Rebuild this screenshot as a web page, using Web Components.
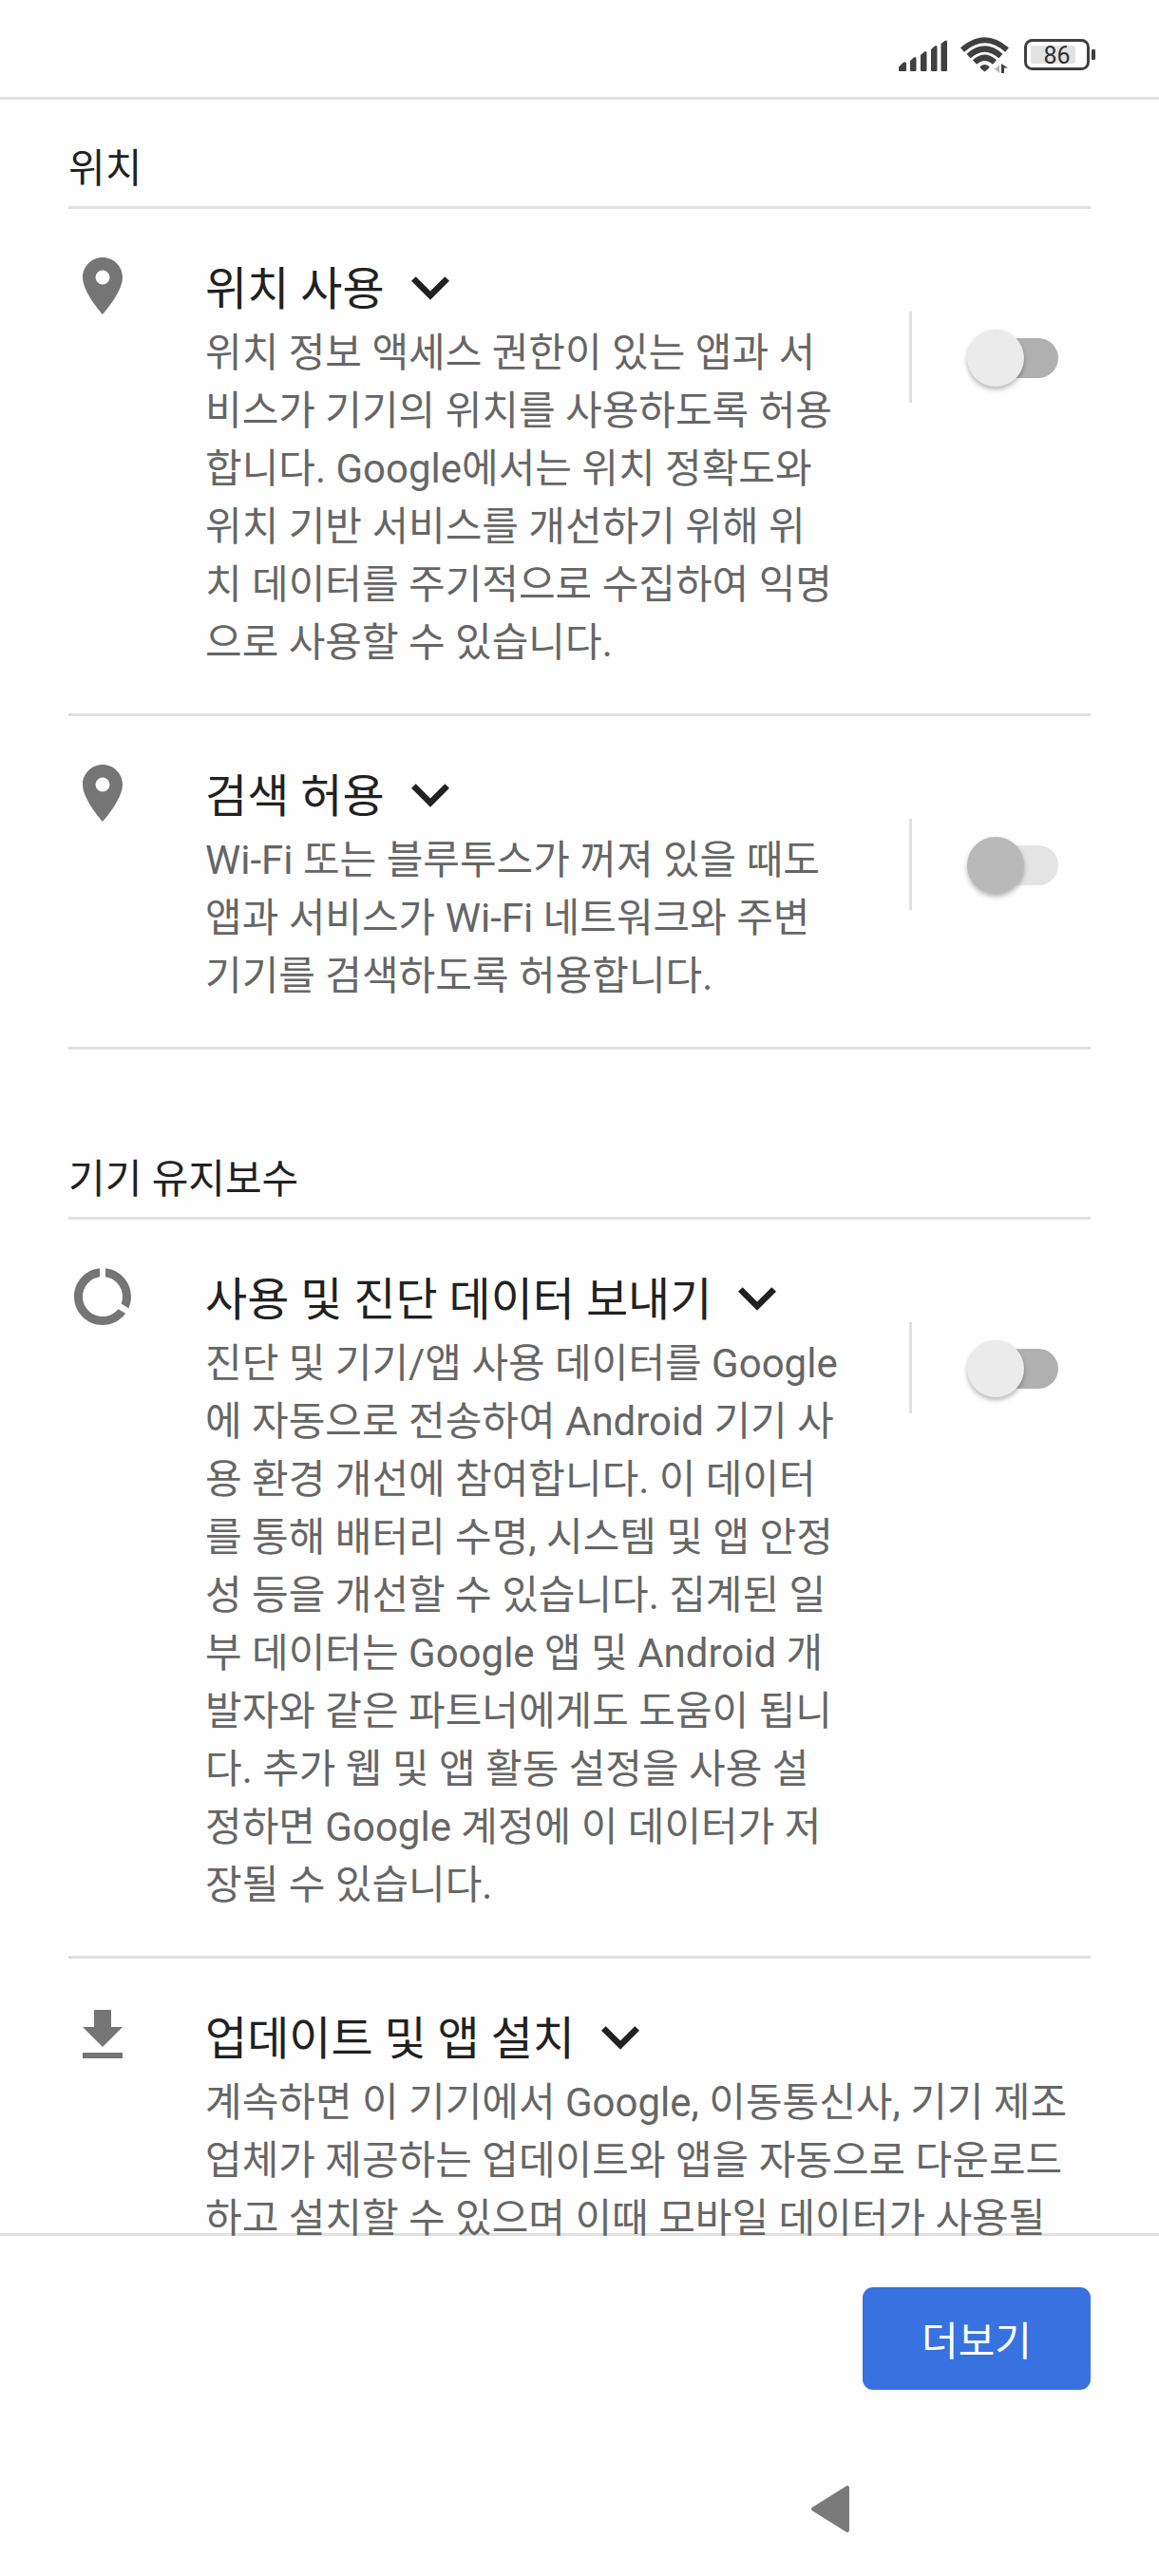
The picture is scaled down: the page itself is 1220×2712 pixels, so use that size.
<!DOCTYPE html>
<html lang="ko">
<head>
<meta charset="utf-8">
<meta name="viewport" content="width=device-width, initial-scale=1">
<title>Google 서비스</title>
<style>
  :root {
    --ink: #212121;
    --muted: #666666;
    --icon: #757575;
    --line: #e0e0e0;
    --accent: #3872e0;
    --gutter: 72px;
  }
  body {
    margin: 0;
    background: #fefefe;
    color: var(--ink);
    font-family: Roboto, "Noto Sans CJK KR", sans-serif;
    font-size: 42px;
    line-height: 61px;
  }
</style>
</head>
<body>
<setup-page>
  <status-bar slot="status"></status-bar>
  <setting-section heading="위치">
    <setting-item icon="place" heading="위치 사용" control="off">위치 정보 액세스 권한이 있는 앱과 서비스가 기기의 위치를 사용하도록 허용합니다. Google에서는 위치 정확도와 위치 기반 서비스를 개선하기 위해 위치 데이터를 주기적으로 수집하여 익명으로 사용할 수 있습니다.</setting-item>
    <setting-item icon="place" heading="검색 허용" control="disabled">Wi-Fi 또는 블루투스가 꺼져 있을 때도 앱과 서비스가 Wi-Fi 네트워크와 주변 기기를 검색하도록 허용합니다.</setting-item>
  </setting-section>
  <setting-section heading="기기 유지보수">
    <setting-item icon="usage" heading="사용 및 진단 데이터 보내기" control="off">진단 및 기기/앱 사용 데이터를 Google에 자동으로 전송하여 Android 기기 사용 환경 개선에 참여합니다. 이 데이터를 통해 배터리 수명, 시스템 및 앱 안정성 등을 개선할 수 있습니다. 집계된 일부 데이터는 Google 앱 및 Android 개발자와 같은 파트너에게도 도움이 됩니다. 추가 웹 및 앱 활동 설정을 사용 설정하면 Google 계정에 이 데이터가 저장될 수 있습니다.</setting-item>
    <setting-item icon="download" heading="업데이트 및 앱 설치">계속하면 이 기기에서 Google, 이동통신사, 기기 제조업체가 제공하는 업데이트와 앱을 자동으로 다운로드하고 설치할 수 있으며 이때 모바일 데이터가 사용될</setting-item>
  </setting-section>
  <action-bar slot="footer">더보기</action-bar>
  <nav-bar slot="footer"></nav-bar>
</setup-page>

<script>
  const define = (name, html, setup) => {
    const template = document.createElement('template');
    template.innerHTML = html;
    customElements.define(name, class extends HTMLElement {
      constructor() {
        super();
        this.attachShadow({ mode: 'open' }).append(template.content.cloneNode(true));
      }
      connectedCallback() {
        if (setup) setup(this, this.shadowRoot);
      }
    });
  };

  define('setup-page', `
    <style>
      :host { display: flex; flex-direction: column; height: 100vh; }
      /* the inset rule sits beneath scrolled text */
      main { flex: 1; min-height: 0; overflow: hidden; padding: 0 var(--gutter); box-shadow: inset 0 -3px var(--line); }
    </style>
    <slot name="status"></slot>
    <main><slot></slot></main>
    <slot name="footer"></slot>`);

  define('status-bar', `
    <style>
      :host { display: flex; flex: none; justify-content: flex-end; align-items: center; height: 102px; padding-right: 66px; border-bottom: 3px solid var(--line); }
      svg { display: block; width: 210px; height: 40px; margin-top: 16px; fill: #404040; }
      text { font: 25px Roboto, sans-serif; fill: #303030; }
      .wave { fill: none; stroke: #404040; stroke-width: 6; }
    </style>
    <svg viewBox="0 0 210 40" role="img" aria-label="신호, Wi-Fi, 배터리 86%">
      <path d="M2 35V31.500L6 27.500Q10 25 10 28V35Q10 36 9 36H3Q2 36 2 35Z"/>
      <path d="M14 35V25L18 21.500Q20.500 20 20.500 23V35Q20.500 36 19.500 36H15Q14 36 14 35Z"/>
      <path d="M25 35V19L29 15.500Q31.500 14 31.500 17V35Q31.500 36 30.500 36H26Q25 36 25 35Z"/>
      <path d="M36 35V13L40 9.500Q42.500 8 42.500 11V35Q42.500 36 41.500 36H37Q36 36 36 35Z"/>
      <path d="M46.500 35V7L50.500 4Q53 2.500 53 5V35Q53 36 52 36H47.500Q46.500 36 46.500 35Z"/>
      <path class="wave" d="M69 13.500Q92.500 -7 116 13.500"/>
      <path class="wave" d="M75.500 20Q92.500 5 109.500 20"/>
      <path class="wave" d="M82 26.500Q92.500 17 103 26.500"/>
      <path d="M87.500 31Q92.500 27 97.500 31Q97.500 33 92.500 36.500Q87.500 33 87.500 31Z"/>
      <path d="M108 29V38L102 32.500H105Z" fill="#b5b5b5"/>
      <path d="M110 38V28L117 32.500H113V38Z"/>
      <rect x="135.500" y="3.500" width="66" height="30" rx="7" fill="none" stroke="#404040" stroke-width="3"/>
      <rect x="141" y="9" width="47" height="19" rx="3" fill="#e3e3e3"/>
      <rect x="205" y="13" width="4" height="11" rx="1"/>
      <text x="168.500" y="28" text-anchor="middle">86</text>
    </svg>`);

  define('setting-section', `
    <style>
      :host { display: block; }
      :host(:not(:first-of-type)) { padding-top: 64px; }
      h2 { margin: 0; padding: 42px 0 9px; border-bottom: 3px solid var(--line); font: inherit; }
    </style>
    <section><h2></h2><slot></slot></section>`,
    (host, root) => { root.querySelector('h2').textContent = host.getAttribute('heading'); });

  define('setting-switch', `
    <style>
      :host { display: flex; align-items: center; box-sizing: border-box; width: 191px; height: 96px; padding: 2px 0 0 58px; border-left: 3px solid var(--line); }
      input { --track: #b0b0b0; --thumb: #ebebeb; appearance: none; display: flex; align-items: center; flex: none; margin: 0; width: 96px; height: 60px; }
      input::before { content: ""; flex: none; width: 60px; height: 60px; border-radius: 50%; background: var(--thumb); box-shadow: 0 3px 5px rgba(0,0,0,.28); z-index: 1; }
      input::after { content: ""; flex: none; width: 84px; height: 42px; margin-left: -48px; border-radius: 21px; background: var(--track); }
      input:disabled { --track: #e4e4e4; --thumb: #b9b9b9; }
    </style>
    <input type="checkbox" role="switch">`,
    (host, root) => {
      const input = root.querySelector('input');
      input.disabled = host.hasAttribute('disabled');
      input.setAttribute('aria-label', host.getAttribute('label'));
    });

  const icons = {
    place: 'M12 2C8.130 2 5 5.130 5 9c0 5.250 7 13 7 13s7-7.750 7-13c0-3.870-3.130-7-7-7zm0 9.500a2.500 2.500 0 0 1 0-5 2.500 2.500 0 0 1 0 5z',
    usage: 'M13 2.050v3.030c3.390.49 6 3.390 6 6.920 0 .9-.18 1.750-.48 2.540l2.600 1.530c.56-1.240.88-2.620.88-4.070 0-5.180-3.950-9.450-9-9.950zM12 19c-3.870 0-7-3.130-7-7 0-3.530 2.610-6.430 6-6.920V2.050c-5.060.5-9 4.760-9 9.950 0 5.520 4.470 10 9.990 10 3.310 0 6.240-1.610 8.060-4.090l-2.600-1.530C16.170 17.980 14.210 19 12 19z',
    download: 'M19 9h-4V3H9v6H5l7 7 7-7zM5 18v2h14v-2H5z'
  };

  define('setting-item', `
    <style>
      :host { display: flex; align-items: flex-start; gap: 72px; padding: 45px 0 44px; border-bottom: 3px solid var(--line); }
      .icon { flex: none; width: 72px; height: 72px; fill: var(--icon); }
      .body { flex: 1; min-width: 0; }
      h3 { margin: 0; font: inherit; }
      button { display: flex; align-items: center; gap: 28px; margin: 0; padding: 0; border: 0; background: none; color: inherit; font: inherit; font-size: 48px; line-height: 72px; text-align: left; }
      span { padding-top: 4px; }
      .chevron { flex: none; width: 40px; height: 25px; fill: var(--ink); }
      p { margin: 0; color: var(--muted); }
      setting-switch { flex: none; margin-top: 63px; }
    </style>
    <svg class="icon" viewBox="0 0 24 24" aria-hidden="true"><path/></svg>
    <div class="body">
      <h3><button type="button" aria-expanded="false"><span></span><svg class="chevron" viewBox="6 8.590 12 7.410" aria-hidden="true"><path d="M16.590 8.590L12 13.170 7.410 8.590 6 10l6 6 6-6z"/></svg></button></h3>
      <p><slot></slot></p>
    </div>`,
    (host, root) => {
      root.querySelector('.icon path').setAttribute('d', icons[host.getAttribute('icon')]);
      root.querySelector('span').textContent = host.getAttribute('heading');
      const control = host.getAttribute('control');
      if (control) {
        const toggle = document.createElement('setting-switch');
        toggle.setAttribute('label', host.getAttribute('heading'));
        if (control === 'disabled') toggle.setAttribute('disabled', '');
        root.append(toggle);
      }
    });

  define('action-bar', `
    <style>
      :host { display: flex; flex: none; justify-content: flex-end; padding: 54px var(--gutter); }
      button { min-width: 240px; height: 108px; padding: 6px 60px 0; border: 0; border-radius: 11px; background: var(--accent); color: #fff; font: inherit; }
    </style>
    <button type="button"><slot></slot></button>`);

  define('nav-bar', `
    <style>
      :host { display: flex; flex: none; justify-content: flex-end; align-items: center; height: 142px; padding-right: 306px; }
      button { display: grid; place-items: center; width: 80px; height: 80px; padding: 0; border: 0; background: none; }
      svg { width: 40px; height: 49px; fill: #7a7a7a; stroke: #7a7a7a; stroke-width: 4; stroke-linejoin: round; }
    </style>
    <button type="button" aria-label="뒤로"><svg viewBox="0 0 40 49"><path d="M38 2V47L2 24.500Z"/></svg></button>`);
</script>
</body>
</html>
